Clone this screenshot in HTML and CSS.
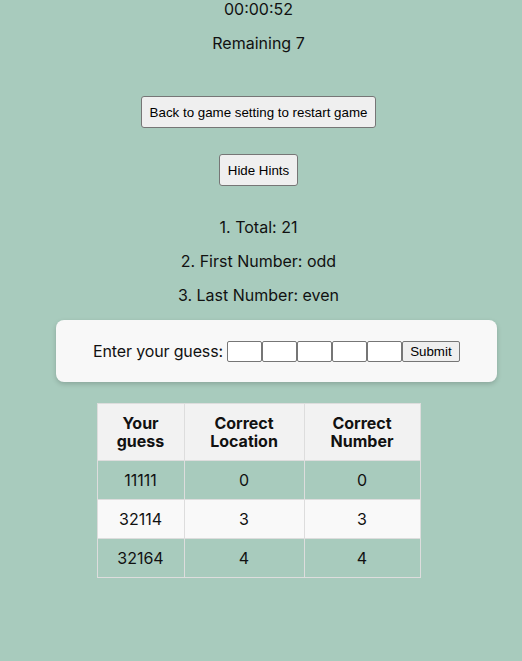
FILE: index.html
```html
<!DOCTYPE html>
<html>
<head>
<meta charset="utf-8">
<link rel="stylesheet" href="styles.css">
</head>
<body>
<div class="app">
  <div class="timer">00:00:52</div>
  <div class="remaining">Remaining 7</div>
  <button class="btn restart">Back to game setting to restart game</button>
  <button class="btn hints-btn">Hide Hints</button>
  <div class="hints">
    <div class="hint">1. Total: 21</div>
    <div class="hint">2. First Number: odd</div>
    <div class="hint">3. Last Number: even</div>
  </div>
  <div class="card">
    <span class="label">Enter your guess:</span>
    <span class="inputs">
      <input class="digit" type="text">
      <input class="digit" type="text">
      <input class="digit" type="text">
      <input class="digit" type="text">
      <input class="digit" type="text">
    </span>
    <button class="submit">Submit</button>
  </div>
  <table class="results">
    <thead>
      <tr><th class="c1">Your<br>guess</th><th class="c2">Correct<br>Location</th><th class="c3">Correct<br>Number</th></tr>
    </thead>
    <tbody>
      <tr><td>11111</td><td>0</td><td>0</td></tr>
      <tr class="alt"><td>32114</td><td>3</td><td>3</td></tr>
      <tr><td>32164</td><td>4</td><td>4</td></tr>
    </tbody>
  </table>
</div>
</body>
</html>
```

FILE: styles.css
```css
html, body {
  margin: 0;
  padding: 0;
  background: #a8cbbd;
}
body {
  font-family: Inter, "Noto Sans", sans-serif;
  font-size: 16px;
  color: #111;
}
.app {
  display: flex;
  flex-direction: column;
  align-items: center;
  width: 517px;
}
.timer {
  margin-top: 0;
  height: 19px;
  line-height: 19px;
}
.remaining {
  margin-top: 15px;
  height: 19px;
  line-height: 19px;
}
.btn {
  font-family: "Liberation Sans", Arial, sans-serif;
  font-size: 13.33px;
  color: #000;
  background: #efefef;
  border: 1px solid #767676;
  border-radius: 3px;
  padding: 0 8px;
  height: 32px;
}
.restart {
  margin-top: 43px;
}
.hints-btn {
  margin-top: 26px;
}
.hints {
  margin-top: 32px;
  display: flex;
  flex-direction: column;
  align-items: center;
  gap: 15px;
}
.hint {
  height: 19px;
  line-height: 19px;
}
.card {
  margin-top: 15px;
  margin-left: 36px;
  width: 441px;
  height: 62px;
  box-sizing: border-box;
  background: #f8f8f8;
  border-radius: 8px;
  box-shadow: 0 2px 5px rgba(0,0,0,0.18);
  display: flex;
  align-items: center;
  justify-content: center;
}
.label {
  margin-right: 4px;
  letter-spacing: -0.15px;
}
.inputs {
  display: flex;
}
.digit {
  width: 35px;
  height: 21px;
  box-sizing: border-box;
  border: 1px solid #767676;
  border-radius: 2px;
  padding: 0;
  margin: 0;
  background: #fff;
}
.submit {
  font-family: "Liberation Sans", Arial, sans-serif;
  font-size: 13.33px;
  color: #000;
  background: #efefef;
  border: 1px solid #767676;
  border-radius: 2px;
  height: 21px;
  width: 58px;
  padding: 0;
  margin: 0;
}
.results {
  margin-top: 21px;
  margin-left: 0;
  border-collapse: collapse;
}
.results th, .results td {
  border: 1px solid #ddd;
  text-align: center;
  padding: 0;
}
.results th {
  background: #f2f2f2;
  font-weight: 700;
  height: 56px;
  line-height: 18px;
}
.results td {
  height: 38px;
}
.c1 { width: 86px; }
.c2 { width: 119px; }
.c3 { width: 115px; }
.alt td {
  background: #f9f9f9;
}
```
